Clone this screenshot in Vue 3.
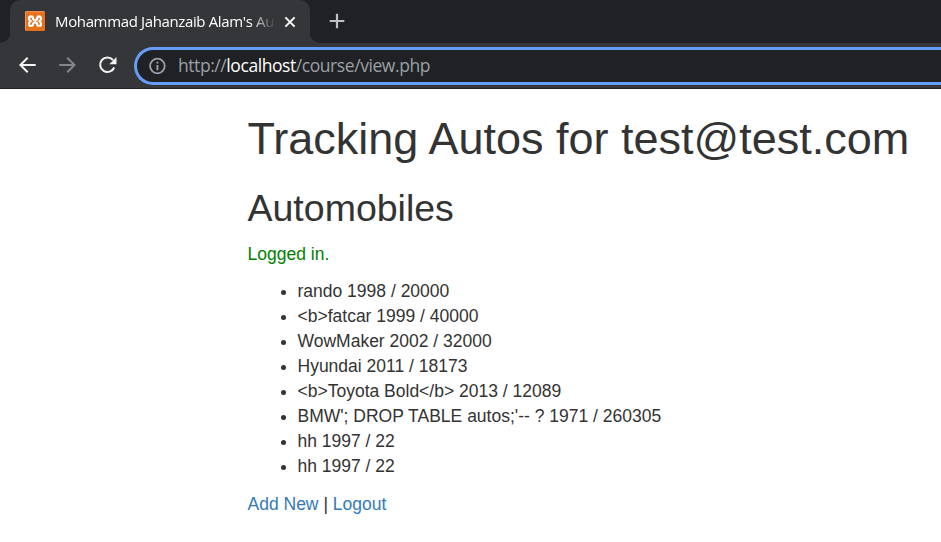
<script setup>
const autos = [
  { make: 'rando', year: 1998, mileage: 20000 },
  { make: '<b>fatcar', year: 1999, mileage: 40000 },
  { make: 'WowMaker', year: 2002, mileage: 32000 },
  { make: 'Hyundai', year: 2011, mileage: 18173 },
  { make: '<b>Toyota Bold</b>', year: 2013, mileage: 12089 },
  { make: "BMW'; DROP TABLE autos;'-- ?", year: 1971, mileage: 260305 },
  { make: 'hh', year: 1997, mileage: 22 },
  { make: 'hh', year: 1997, mileage: 22 },
]
</script>

<template>
  <div class="window">
    <header class="tabstrip">
      <svg class="flare" viewBox="0 0 10 43"><path d="M10 33v10H0A10 10 0 0 0 10 33Z" fill="#35363a" /></svg>
      <div class="tab">
        <svg class="favicon" width="20" height="20" viewBox="0 0 20 20">
          <rect width="20" height="20" rx="1.5" fill="#e8701c" />
          <path d="M.5 19V.8h18.8" fill="none" stroke="#ef9a5b" />
          <path d="M8 7.4Q8 5.4 6.1 5.4Q3.9 5.5 4 7.5Q4.2 9.2 5.6 10.1Q4 11.2 4 13Q4 15 6.1 15Q8 14.9 8 13M12.2 7.4Q12.2 5.4 14 5.4Q16.2 5.5 16 7.5Q15.8 9.2 14.5 10.1Q16 11.2 16 13Q16 15 14 15Q12.2 14.9 12.2 13M8 7.4Q8.3 9.2 10.1 9.2Q12 9.2 12.2 7.4M8 13Q8.3 11.4 10.1 11.4Q12 11.4 12.2 13" fill="none" stroke="#fff" stroke-width="2.2" stroke-linecap="round" />
        </svg>
        <span class="tab-title">Mohammad Jahanzaib Alam's Au</span>
        <svg class="close" width="12" height="12" viewBox="0 0 12 12"><path d="M1.4 1.4 10.6 10.6M10.6 1.4 1.4 10.6" stroke="#fff" stroke-width="2" /></svg>
      </div>
      <svg class="flare" viewBox="0 0 10 43"><path d="M0 33v10h10A10 10 0 0 1 0 33Z" fill="#35363a" /></svg>
      <svg class="plus" width="16" height="16" viewBox="0 0 16 16"><path d="M8 .7v14.6M.7 8h14.6" stroke="#bdc1c6" stroke-width="2.2" /></svg>
    </header>
    <nav class="toolbar">
      <svg class="nav-icon" width="20" height="20" viewBox="0 0 20 20"><path d="M18.7 10H3.7M10.7 2.7 3.4 10l7.3 7.3" fill="none" stroke="#f1f3f4" stroke-width="2" /></svg>
      <svg class="nav-icon" width="20" height="20" viewBox="0 0 20 20"><path d="M2.2 10h15M10.2 2.7 17.5 10l-7.3 7.3" fill="none" stroke="#85868a" stroke-width="2" /></svg>
      <svg class="nav-icon" width="20" height="20" viewBox="0 0 20 20"><path d="M16 5A7.3 7.3 0 1 0 17.2 12.5" fill="none" stroke="#f1f3f4" stroke-width="2" /><path d="M19.5 2v7.2h-7.2Z" fill="#f1f3f4" /></svg>
      <div class="omnibox">
        <svg width="18" height="18" viewBox="0 0 18 18"><circle cx="9.4" cy="9" r="7.3" fill="none" stroke="#9aa0a6" stroke-width="1.8" /><path d="M9.4 4.7v1.9M9.4 8.1v5.2" stroke="#9aa0a6" stroke-width="1.9" /></svg>
        <span class="url">http://<span class="host">localhost</span>/course/view.php</span>
      </div>
    </nav>
    <main class="page">
      <h1>Tracking Autos for test@test.com</h1>
      <h2>Automobiles</h2>
      <p class="success">Logged in.</p>
      <ul>
        <li v-for="(auto, i) in autos" :key="i">{{ auto.make }} {{ auto.year }} / {{ auto.mileage }}</li>
      </ul>
      <p class="links"><a>Add New</a> | <a>Logout</a></p>
    </main>
  </div>
</template>

<style>
body {
  margin: 0;
  overflow: hidden;
}
</style>

<style scoped>
.window {
  box-sizing: border-box;
  width: 941px;
  height: 542px;
  overflow: hidden;
  background: #fff;
}
.tabstrip {
  display: flex;
  height: 43px;
  background: #202124;
}
.flare {
  width: 10px;
  height: 43px;
  flex: none;
}
.tab {
  box-sizing: border-box;
  display: flex;
  align-items: center;
  width: 300px;
  padding: 0 0 0 15px;
  border-radius: 10px 10px 0 0;
  background: #35363a;
}
.favicon {
  flex: none;
  margin-top: -1px;
}
.tab-title {
  width: 219px;
  margin: -2px 0 0 10px;
  white-space: nowrap;
  font: 15px/20px "Open Sans", "Noto Sans", sans-serif;
  letter-spacing: -0.36px;
  color: #fff;
  -webkit-mask-image: linear-gradient(to right, #000 195px, transparent 221px);
  mask-image: linear-gradient(to right, #000 195px, transparent 221px);
}
.close {
  flex: none;
  margin-left: 10px;
}
.plus {
  align-self: center;
  margin: -1px 0 0 9px;
}
.toolbar {
  box-sizing: border-box;
  display: flex;
  align-items: center;
  height: 46px;
  padding-left: 17px;
  border-bottom: 1px solid #202124;
  background: #35363a;
}
.nav-icon {
  flex: none;
  margin: -1px 20px 0 0;
}
.omnibox {
  box-sizing: border-box;
  display: flex;
  flex: 1;
  align-items: center;
  height: 38px;
  margin-left: -3px;
  padding-left: 11px;
  border: 3px solid #669df6;
  border-right: 0;
  border-radius: 19px 0 0 19px;
  background: #202124;
}
.url {
  margin: -1px 0 0 12px;
  white-space: nowrap;
  font: 17.5px/24px "Open Sans", "Noto Sans", sans-serif;
  letter-spacing: -0.43px;
  color: #9aa0a6;
}
.host {
  color: #fff;
}
.page {
  padding: 25px 0 0 247.5px;
  font: 17.5px/25px "Liberation Sans", Arial, sans-serif;
  color: #333;
}
h1,
h2 {
  font-weight: 500;
  line-height: 1.1;
  white-space: nowrap;
}
h1 {
  margin: 0 0 24px;
  font-size: 45px;
}
h2 {
  margin: 0 0 13.5px;
  font-size: 37.5px;
}
p {
  margin: 0 0 12.5px;
}
.success {
  margin-bottom: 11.5px;
  color: green;
}
ul {
  margin: 0 0 13.5px;
  padding-left: 50px;
}
a {
  color: #337ab7;
}
</style>
